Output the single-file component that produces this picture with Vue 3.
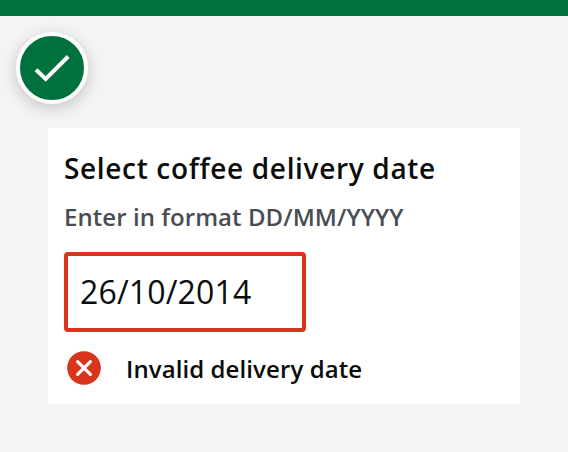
<script setup>
import { ref } from 'vue'
const date = ref('26/10/2014')
</script>

<template>
  <main class="page">
    <div class="badge">
      <svg width="72" height="72" viewBox="0 0 72 72" fill="none">
        <path d="M20 37.7L29.7 47L52.2 24.5" stroke="#fff" stroke-width="4" />
      </svg>
    </div>
    <section class="card">
      <h1 class="title">Select coffee delivery date</h1>
      <p class="hint">Enter in format DD/MM/YYYY</p>
      <div class="field">{{ date }}</div>
      <div class="error">
        <svg width="34" height="34" viewBox="0 0 34 34">
          <circle cx="17" cy="17" r="16.8" fill="#d8341c" />
          <path d="M10.6 10.6L23.4 23.4M23.4 10.6L10.6 23.4" stroke="#fff" stroke-width="3.2" stroke-linecap="round" />
        </svg>
        <span class="message">Invalid delivery date</span>
      </div>
    </section>
  </main>
</template>

<style>
body { background: #f4f4f4; }
</style>
<style scoped>
.page {
  box-sizing: border-box;
  height: 452px;
  border-top: 16px solid #00703c;
  padding: 16px 48px 48px 16px;
  background: #f4f4f4;
  color: #0b0c0c;
  font-family: "Open Sans", "Noto Sans", sans-serif;
  overflow: hidden;
}
.badge {
  box-sizing: border-box;
  width: 72px;
  height: 72px;
  border: 4px solid #fff;
  border-radius: 50%;
  background: #00703c;
  box-shadow: 0 4px 16px rgba(0, 0, 0, 0.2);
}
.badge svg { display: block; margin: -4px; }
.card {
  box-sizing: border-box;
  height: 276px;
  margin: 24px 0 0 32px;
  padding: 20px 16px;
  background: #fff;
}
.title {
  margin: 0;
  font-size: 28px;
  font-weight: 600;
  line-height: 40px;
  letter-spacing: 0.66px;
  white-space: nowrap;
}
.hint {
  margin: 12px 0 0;
  font-size: 24px;
  font-weight: 600;
  line-height: 34px;
  letter-spacing: 0.06px;
  color: #484d54;
  white-space: nowrap;
}
.field {
  box-sizing: border-box;
  width: 242px;
  height: 80px;
  margin-top: 18px;
  padding: 0 12px;
  border: 4px solid #d8341c;
  border-radius: 4px;
  font-size: 32px;
  letter-spacing: 0.15px;
  line-height: 72px;
}
.error {
  display: flex;
  align-items: center;
  gap: 25px;
  margin: 19px 0 0 3px;
}
.error svg { flex: none; }
.message {
  padding-top: 1px;
  margin-bottom: -1px;
  font-size: 24px;
  font-weight: 600;
  line-height: 34px;
  letter-spacing: 0.09px;
  white-space: nowrap;
}
</style>
